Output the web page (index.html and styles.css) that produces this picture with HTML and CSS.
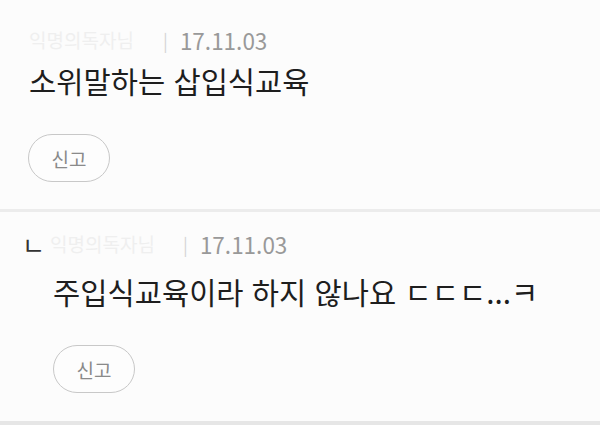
FILE: index.html
```html
<!DOCTYPE html>
<html lang="ko">
<head>
<meta charset="utf-8">
<link rel="stylesheet" href="styles.css">
</head>
<body>
<div class="list">
  <div class="comment first">
    <div class="meta">
      <span class="name">익명의독자님</span>
      <span class="bar">|</span>
      <span class="date">17.11.03</span>
    </div>
    <div class="text">소위말하는 삽입식교육</div>
    <button class="report">신고</button>
  </div>
  <div class="divider"></div>
  <div class="comment reply">
    <div class="meta">
      <span class="arrow">ㄴ</span>
      <span class="name">익명의독자님</span>
      <span class="bar">|</span>
      <span class="date">17.11.03</span>
    </div>
    <div class="body">
      <div class="text">주입식교육이라 하지 않나요 ㄷㄷㄷ...ㅋ</div>
      <button class="report">신고</button>
    </div>
  </div>
  <div class="bottom"></div>
</div>
</body>
</html>
```

FILE: styles.css
```css
html, body {
  margin: 0;
  padding: 0;
  background: #fcfcfc;
  font-family: "Noto Sans CJK KR", "Noto Sans", sans-serif;
}
.list {
  width: 600px;
  height: 425px;
  display: flex;
  flex-direction: column;
  overflow: hidden;
}
.comment {
  display: flex;
  flex-direction: column;
  align-items: flex-start;
}
.first {
  padding: 28px 0 27px 29px;
}
.reply {
  padding: 20px 0 28px 27px;
}
.meta {
  display: flex;
  align-items: center;
  height: 24px;
  line-height: 24px;
}
.name {
  font-size: 19px;
  color: #efefef;
  width: 126px;
  white-space: nowrap;
}
.reply .name {
  width: 125px;
}
.arrow {
  font-size: 25px;
  color: #333;
  width: 23px;
  margin-left: -5px;
  margin-right: 5px;
}
.bar {
  font-size: 18px;
  color: #d6d6d6;
  margin: 0 12px 0 8px;
}
.date {
  font-size: 22.5px;
  color: #999;
}
.text {
  font-size: 29.6px;
  line-height: 36px;
  color: #1e1e1e;
  margin-top: 11px;
  white-space: nowrap;
}
.body {
  display: flex;
  flex-direction: column;
  align-items: flex-start;
  padding-left: 26px;
}
.reply .text {
  margin-top: 18px;
}
.report {
  margin-top: 35px;
  width: 82px;
  height: 48px;
  border: 1.5px solid #c8c8c8;
  border-radius: 24px;
  background: #fdfdfd;
  color: #8a8a8a;
  font-family: "Noto Sans CJK KR", sans-serif;
  font-size: 19px;
  padding: 0;
}
.first .report {
  margin-left: -1px;
}
.divider {
  height: 3px;
  background: #ececec;
  flex: none;
}
.bottom {
  height: 4px;
  background: #e6e6e6;
  flex: none;
}
```
